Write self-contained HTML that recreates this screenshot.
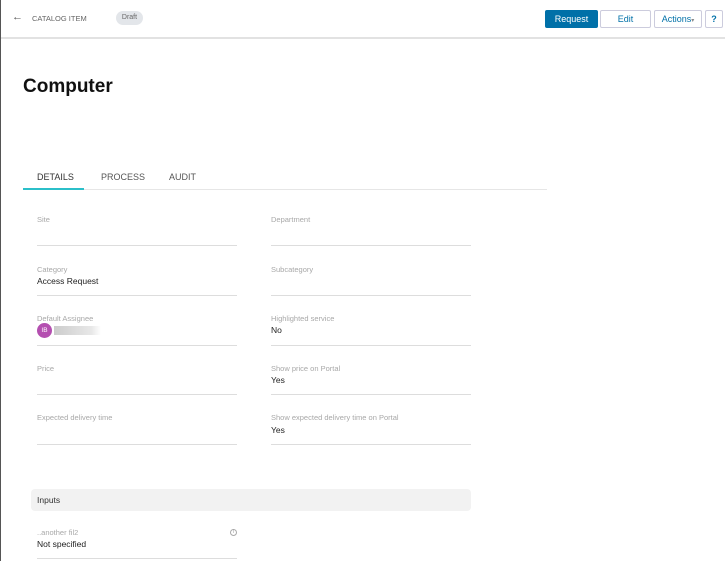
<!DOCTYPE html>
<html><head><style>
*{margin:0;padding:0;box-sizing:border-box}
body{width:725px;height:561px;overflow:hidden;background:#fff;font-family:"Liberation Sans",sans-serif;position:relative}
.a{position:absolute;white-space:nowrap}
.lb{font-size:7.5px;color:#a8a8a8}
.v{font-size:8.5px;color:#222}
.ln{position:absolute;height:1px;background:#ddd;width:200px}
.btn{position:absolute;top:10px;height:18px;border:1px solid #ccd;border-radius:2px;font-size:9px;color:#0070a8;text-align:center;line-height:16px;background:#fff}
</style></head><body>
<div class="a" style="left:0;top:0;width:1px;height:561px;background:#555"></div>
<div class="a" style="left:1px;top:37px;width:724px;height:2px;background:#e2e2e2"></div>
<div class="a" style="left:12px;top:11px;font-size:11px;color:#555">&#8592;</div>
<div class="a" style="left:32px;top:14px;font-size:7.5px;color:#666">CATALOG ITEM</div>
<div class="a" style="left:116px;top:11px;width:27px;height:14px;border-radius:7px;background:#e3e6ea;font-size:7px;color:#666;text-align:center;line-height:14px">Draft</div>
<div class="btn" style="left:545px;width:53px;background:#0070a8;border-color:#0070a8;color:#fff">Request</div>
<div class="btn" style="left:600px;width:51px">Edit</div>
<div class="btn" style="left:654px;width:48px">Actions<span style="font-size:6px;color:#888">▾</span></div>
<div class="btn" style="left:705px;width:18px;font-weight:bold">?</div>
<div class="a" style="left:23px;top:76px;font-size:19px;font-weight:bold;color:#111">Computer</div>
<div class="a" style="left:37px;top:172px;font-size:9px;color:#333">DETAILS</div>
<div class="a" style="left:101px;top:172px;font-size:9px;color:#555">PROCESS</div>
<div class="a" style="left:169px;top:172px;font-size:9px;color:#555">AUDIT</div>
<div class="a" style="left:23px;top:189px;width:524px;height:1px;background:#e6e6e6"></div>
<div class="a" style="left:23px;top:188px;width:61px;height:2px;background:#2bbfc9"></div>

<div class="a lb" style="left:37px;top:215px">Site</div><div class="ln" style="left:37px;top:245px"></div>
<div class="a lb" style="left:271px;top:215px">Department</div><div class="ln" style="left:271px;top:245px"></div>

<div class="a lb" style="left:37px;top:265px">Category</div><div class="a v" style="left:37px;top:276px">Access Request</div><div class="ln" style="left:37px;top:295px"></div>
<div class="a lb" style="left:271px;top:265px">Subcategory</div><div class="ln" style="left:271px;top:295px"></div>

<div class="a lb" style="left:37px;top:314px">Default Assignee</div>
<div class="a" style="left:37px;top:323px;width:15px;height:15px;border-radius:50%;background:#b44fb0;color:#fff;font-size:6.5px;text-align:center;line-height:15px">IB</div>
<div class="a" style="left:54px;top:326px;width:47px;height:9px;background:linear-gradient(90deg,#ccc,#e8e8e8 80%,#fff)"></div>
<div class="ln" style="left:37px;top:345px"></div>
<div class="a lb" style="left:271px;top:314px">Highlighted service</div><div class="a v" style="left:271px;top:325px">No</div><div class="ln" style="left:271px;top:345px"></div>

<div class="a lb" style="left:37px;top:364px">Price</div><div class="ln" style="left:37px;top:394px"></div>
<div class="a lb" style="left:271px;top:364px">Show price on Portal</div><div class="a v" style="left:271px;top:375px">Yes</div><div class="ln" style="left:271px;top:394px"></div>

<div class="a lb" style="left:37px;top:413px">Expected delivery time</div><div class="ln" style="left:37px;top:444px"></div>
<div class="a lb" style="left:271px;top:413px">Show expected delivery time on Portal</div><div class="a v" style="left:271px;top:425px">Yes</div><div class="ln" style="left:271px;top:444px"></div>

<div class="a" style="left:31px;top:489px;width:440px;height:22px;background:#f2f2f2;border-radius:4px"></div>
<div class="a" style="left:37px;top:495px;font-size:8.5px;color:#333">Inputs</div>

<div class="a lb" style="left:37px;top:528px">..another fil2</div>
<div class="a" style="left:230px;top:529px;width:7px;height:7px;border:1px solid #aaa;border-radius:50%;font-size:5px;color:#999;text-align:center;line-height:5px">i</div>
<div class="a v" style="left:37px;top:539px">Not specified</div><div class="ln" style="left:37px;top:558px"></div>
</body></html>
